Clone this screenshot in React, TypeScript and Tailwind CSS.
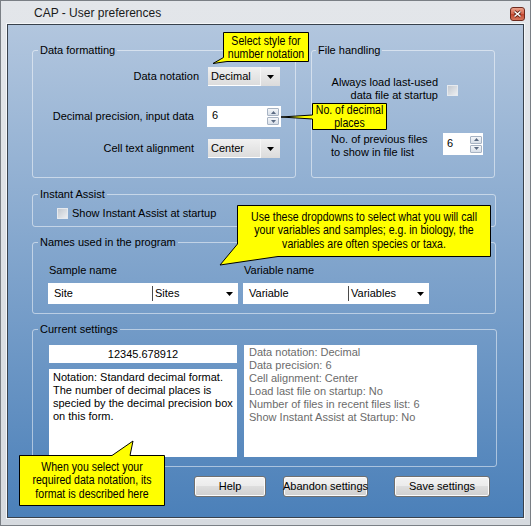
import React from "react";

const Arrow = () => (
  <svg width="7" height="4" viewBox="0 0 7 4">
    <path d="M0 0H7L3.5 4Z" fill="#000" />
  </svg>
);

const Combo = ({ value }: { value: string }) => (
  <div className="flex h-[19px] w-[72px] bg-[linear-gradient(to_bottom,#f1f1f1,#dbdbdb)]">
    <div className="flex flex-1 items-center border-b border-r border-b-white border-r-[#f6f6f6] pl-[3px]">{value}</div>
    <div className="flex w-[19px] items-center justify-center">
      <Arrow />
    </div>
  </div>
);

const SpinBtn = ({ up }: { up?: boolean }) => (
  <div className="flex h-[8px] w-[12px] items-center justify-center rounded-[1px] border border-[#a7b3c3] bg-[linear-gradient(to_bottom,#f4f6f9,#d8dfe8)]">
    <svg width="5" height="3" viewBox="0 0 5 3">
      <path d={up ? "M0 3H5L2.5 0Z" : "M0 0H5L2.5 3Z"} fill="#5a6a82" />
    </svg>
  </div>
);

const Spin = () => (
  <div className="flex flex-col gap-[1px]">
    <SpinBtn up />
    <SpinBtn />
  </div>
);

const Check = () => (
  <div className="h-[11px] w-[11px] shrink-0 border border-[#e6eaef] bg-[linear-gradient(135deg,#c3c9d0,#eceef1)]" />
);

const NameDrop = ({ a, b, w, split }: { a: string; b: string; w: string; split: string }) => (
  <div className={`flex h-[21px] items-center bg-white ${w}`}>
    <div className={`pl-[6px] ${split}`}>{a}</div>
    <div className="h-[15px] w-px bg-[#4a4a4a]" />
    <div className="flex-1 pl-[2px]">{b}</div>
    <div className="mr-[5px]">
      <Arrow />
    </div>
  </div>
);

const Btn = ({ children, cls }: { children: React.ReactNode; cls: string }) => (
  <button
    className={`flex h-[21px] items-center justify-center whitespace-nowrap rounded-[3px] border border-[#707070] bg-[linear-gradient(to_bottom,#f3f3f3_0%,#ebebeb_50%,#dddddd_50%,#cfcfcf_100%)] text-[11px] text-black shadow-[inset_0_0_0_1px_#fbfbfb] ${cls}`}
  >
    {children}
  </button>
);

const fs = "rounded-[3px] border border-white/50";

export default function App() {
  return (
    <div className="relative h-[526px] w-[531px] overflow-hidden bg-[linear-gradient(to_bottom,#e3e6ea,#d6dadf)] font-['Liberation_Sans',Arial,sans-serif] text-[11px] leading-[13px] text-black shadow-[inset_0_0_0_1px_#7a7f85]">
      <div className="flex h-[24px] items-center pl-[34px] pt-[2px] text-[12px] text-[#1a1a1a]">CAP - User preferences</div>

      <div className="absolute left-[510px] top-[7px] flex h-[14px] w-[15px] items-center justify-center rounded-[3px] border border-[#6e2a1e] bg-[linear-gradient(to_bottom,#eaa28c,#d5654d_50%,#c2432c_50%,#d6785e)]">
        <svg width="9" height="8" viewBox="0 0 9 8">
          <path d="M1.5 1.5L7.5 6.5M7.5 1.5L1.5 6.5" stroke="#5a1e12" strokeWidth="3" />
          <path d="M1.5 1.5L7.5 6.5M7.5 1.5L1.5 6.5" stroke="#fff" strokeWidth="1.6" />
        </svg>
      </div>

      <div className="ml-[7px] h-[494px] w-[517px] border border-[#38414c] shadow-[0_0_0_1px_#f4f6f8]">
        <div className="h-full w-full bg-[linear-gradient(to_bottom,#b2c6de,#4b80b9)] pl-[24px] pt-[19px]">
          <div className="flex gap-[15px]">
            <fieldset className={`h-[134px] w-[264px] ${fs}`}>
              <legend className="ml-[5px] px-[2px]">Data formatting</legend>
              <div className="flex flex-col pr-[15px]">
                <div className="mt-[10px] flex h-[19px] items-center justify-end">
                  <span className="mr-[9px]">Data notation</span>
                  <Combo value="Decimal" />
                </div>
                <div className="mt-[20px] flex h-[21px] items-center justify-end">
                  <span className="mr-[13px]">Decimal precision, input data</span>
                  <div className="-mr-px flex h-[21px] w-[74px] items-center bg-white pl-[5px] pr-[2px]">
                    <span className="flex-1 pb-[2px]">6</span>
                    <Spin />
                  </div>
                </div>
                <div className="mt-[12px] flex h-[19px] items-center justify-end">
                  <span className="mr-[14px]">Cell text alignment</span>
                  <Combo value="Center" />
                </div>
              </div>
            </fieldset>

            <fieldset className={`h-[134px] w-[184px] ${fs}`}>
              <legend className="ml-[4px] px-[2px]">File handling</legend>
              <div className="mt-[19px] flex items-center justify-end pr-[36px]">
                <div className="text-right">
                  Always load last-used
                  <br />
                  data file at startup
                </div>
                <div className="ml-[9px] mt-[2px]">
                  <Check />
                </div>
              </div>
              <div className="mt-[31px] flex items-start pl-[19px]">
                <div className="w-[112px]">
                  No. of previous files
                  <br />
                  to show in file list
                </div>
                <div className="flex h-[22px] w-[40px] items-center bg-white pl-[4px] pr-[1px]">
                  <span className="flex-1 pb-[2px]">6</span>
                  <Spin />
                </div>
              </div>
            </fieldset>
          </div>

          <fieldset className={`mt-[10px] h-[39px] w-[464px] ${fs}`}>
            <legend className="ml-[5px] px-[2px]">Instant Assist</legend>
            <div className="mt-[6px] flex items-center pl-[24px]">
              <Check />
              <span className="ml-[4px]">Show Instant Assist at startup</span>
            </div>
          </fieldset>

          <fieldset className={`mt-[9px] h-[78px] w-[464px] ${fs}`}>
            <legend className="ml-[5px] px-[2px]">Names used in the program</legend>
            <div className="mt-[15px] flex pl-[15px]">
              <div className="w-[190px] pl-px">Sample name</div>
              <div className="ml-[5px] pl-px">Variable name</div>
            </div>
            <div className="mt-[6px] flex pl-[15px]">
              <NameDrop a="Site" b="Sites" w="w-[190px]" split="w-[104px]" />
              <div className="ml-[5px]">
                <NameDrop a="Variable" b="Variables" w="w-[186px]" split="w-[105px]" />
              </div>
            </div>
          </fieldset>

          <fieldset className={`mt-[9px] h-[144px] w-[465px] ${fs}`}>
            <legend className="ml-[5px] px-[2px]">Current settings</legend>
            <div className="mt-[9px] flex pl-[16px]">
              <div className="flex w-[188px] flex-col">
                <div className="flex h-[18px] items-center justify-center bg-white">12345.678912</div>
                <div className="mt-[6px] h-[88px] whitespace-nowrap bg-white pl-[4px] pt-[2px]">
                  Notation: Standard decimal format.
                  <br />
                  The number of decimal places is
                  <br />
                  specied by the decimal precision box
                  <br />
                  on this form.
                </div>
              </div>
              <div className="ml-[7px] h-[112px] w-[233px] whitespace-nowrap bg-white pl-[5px] pt-px text-[#6b6b6b]">
                Data notation: Decimal
                <br />
                Data precision: 6
                <br />
                Cell alignment: Center
                <br />
                Load last file on startup: No
                <br />
                Number of files in recent files list: 6
                <br />
                Show Instant Assist at Startup: No
              </div>
            </div>
          </fieldset>

          <div className="mt-[9px] flex pl-[162px]">
            <Btn cls="w-[72px]">Help</Btn>
            <Btn cls="ml-[17px] w-[85px]">Abandon settings</Btn>
            <Btn cls="ml-[26px] w-[96px]">Save settings</Btn>
          </div>
        </div>
      </div>

      {/* callouts */}
      <svg className="pointer-events-none absolute left-0 top-0" width="531" height="526" viewBox="0 0 531 526">
        <path d="M223.5 32.5H308.5V61.5H227L213 63.5L223.5 57.5Z" fill="#ffff00" stroke="#000" strokeWidth="1" />
        <path d="M312.5 103.5H386.5V129.5H312.5V119L281 117L312.5 115Z" fill="#ffff00" stroke="#000" strokeWidth="1" />
        <path d="M237.5 205.5H490.5V256.5H278L220 265L237.5 244Z" fill="#ffff00" stroke="#000" strokeWidth="1" />
        <path d="M19.5 455.5H112L133 441L130 455.5H164.5V505.5H19.5Z" fill="#ffff00" stroke="#000" strokeWidth="1" />
      </svg>
      <div className="pointer-events-none absolute inset-0 text-[12px] leading-[13px] text-black">
        <div className="absolute left-[223px] top-[33px] flex h-[29px] w-[86px] scale-x-[0.88] flex-col items-center justify-center whitespace-nowrap">
          <span>Select style for</span>
          <span>number notation</span>
        </div>
        <div className="absolute left-[312px] top-[103px] flex h-[27px] w-[75px] scale-x-[0.88] flex-col items-center justify-center whitespace-nowrap">
          <span>No. of decimal</span>
          <span>places</span>
        </div>
        <div className="absolute left-[237px] top-[205px] flex h-[52px] w-[254px] scale-x-[0.88] flex-col items-center justify-center whitespace-nowrap leading-[13.5px]">
          <span>Use these dropdowns to select what you will call</span>
          <span>your variables and samples; e.g. in biology, the</span>
          <span>variables are often species or taxa.</span>
        </div>
        <div className="absolute left-[19px] top-[456px] flex h-[50px] w-[146px] scale-x-[0.88] flex-col items-center justify-center whitespace-nowrap leading-[13.5px]">
          <span>When you select your</span>
          <span>required data notation, its</span>
          <span>format is described here</span>
        </div>
      </div>
    </div>
  );
}
